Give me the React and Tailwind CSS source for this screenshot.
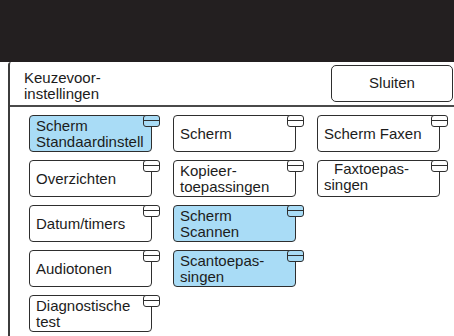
import React from 'react';

const columns = [
  [
    { lines: ['Scherm', 'Standaardinstell'], active: true },
    { lines: ['Overzichten'] },
    { lines: ['Datum/timers'] },
    { lines: ['Audiotonen'] },
    { lines: ['Diagnostische', 'test'] },
  ],
  [
    { lines: ['Scherm'] },
    { lines: ['Kopieer-', 'toepassingen'] },
    { lines: ['Scherm', 'Scannen'], active: true },
    { lines: ['Scantoepas-', 'singen'], active: true },
  ],
  [
    { lines: ['Scherm Faxen'] },
    { lines: ['Faxtoepas-', 'singen'], indent: true },
  ],
];

const Tab = ({ active }) => (
  <span
    className={`absolute -top-px -right-[9px] w-[17px] h-[12px] rounded-[3px] border-[1.5px] border-[#2e2e2e] flex flex-col ${
      active ? 'bg-[#a9dcf6]' : 'bg-white'
    }`}
  >
    <span className="h-[5px] border-b-[1.5px] border-[#2e2e2e]" />
  </span>
);

const MenuButton = ({ lines, active = false, indent = false }) => (
  <button
    className={`relative w-[123px] h-[37px] rounded-[4px] border-[1.5px] border-[#2e2e2e] flex items-center pl-[6px] text-left ${
      active ? 'bg-[#a9dcf6]' : 'bg-white'
    } ${indent ? 'pb-[3px]' : ''}`}
  >
    <span className="flex flex-col leading-4 whitespace-nowrap">
      {lines.map((l, i) => (
        <span key={i} className={indent && i === 0 ? 'ml-[10px]' : ''}>
          {l}
        </span>
      ))}
    </span>
    <Tab active={active} />
  </button>
);

export default function App() {
  return (
    <div className="w-[454px] h-[336px] overflow-hidden bg-white text-[15px] text-[#1c1c1c] font-['Liberation_Sans',Arial,sans-serif]">
      <div className="h-[62px] bg-[#231f20]" />
      <div className="h-[274px] pl-2">
        <div className="h-full border-l-2 border-[#3c3c3c] rounded-tl-[3px]">
          <div className="h-[45px] border-b-2 border-[#4a4a4a] flex items-center justify-between pl-[14px] pr-px">
            <div className="flex flex-col leading-4 mt-[4px]">
              <span>Keuzevoor-</span>
              <span>instellingen</span>
            </div>
            <button className="w-[122px] h-[37px] rounded-[5px] border-[1.5px] border-[#2e2e2e] bg-white">
              Sluiten
            </button>
          </div>
          <div className="flex gap-[21px] pl-[19px] pt-2">
            {columns.map((col, ci) => (
              <div key={ci} className="flex flex-col gap-2">
                {col.map((b, bi) => (
                  <MenuButton key={bi} {...b} />
                ))}
              </div>
            ))}
          </div>
        </div>
      </div>
    </div>
  );
}
